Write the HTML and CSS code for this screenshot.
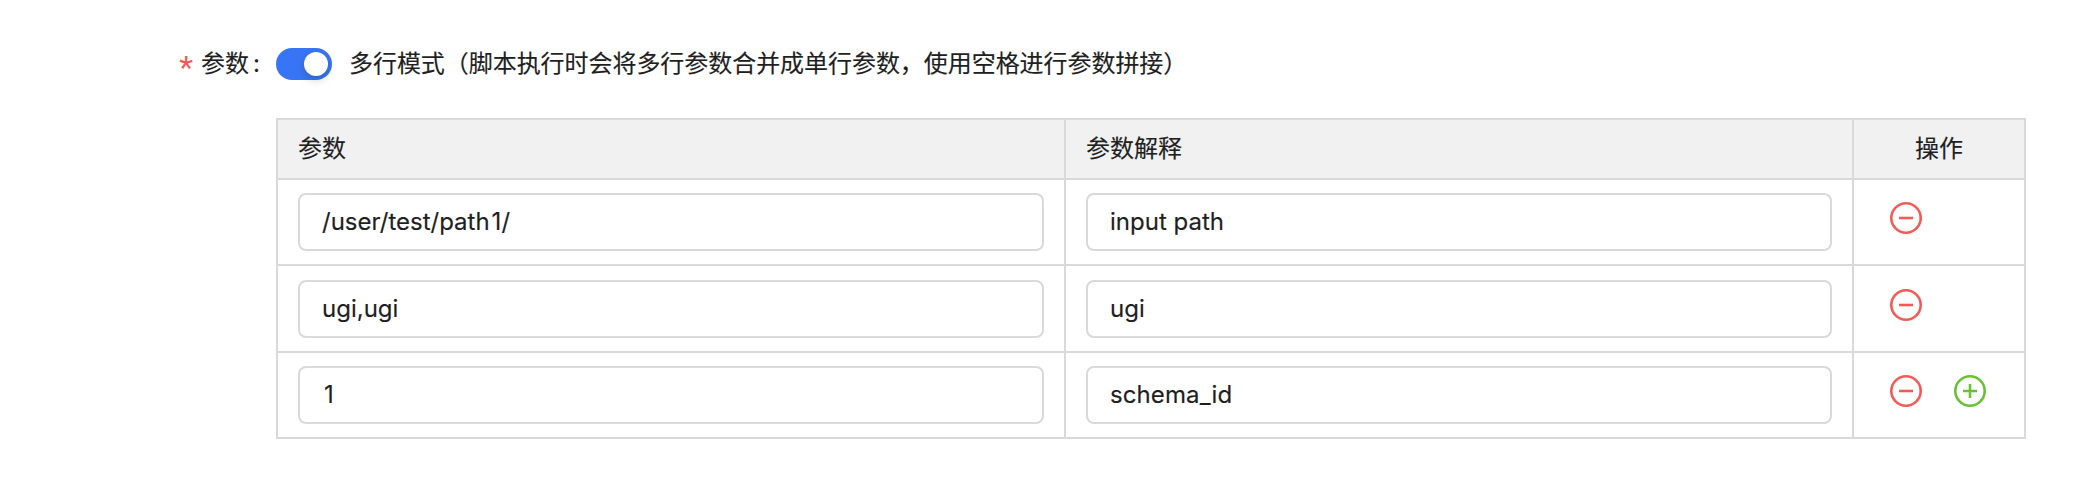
FILE: index.html
```html
<!DOCTYPE html>
<html lang="zh-CN">
<head>
<meta charset="utf-8">
<title>参数</title>
<link rel="stylesheet" href="styles.css">
</head>
<body>
<main class="form-item">
  <div class="label"><span class="required">*</span><span class="label-text">参数</span><span class="colon">:</span></div>
  <div class="control">
    <div class="mode">
      <span class="switch"><span class="knob"></span></span>
      <span class="mode-text">多行模式（脚本执行时会将多行参数合并成单行参数，使用空格进行参数拼接）</span>
    </div>
    <div class="table">
      <div class="row head">
        <div class="cell"><span>参数</span></div>
        <div class="cell"><span>参数解释</span></div>
        <div class="cell center"><span>操作</span></div>
      </div>
      <div class="row">
        <div class="cell"><div class="input">/user/test/path<span class="one">1</span>/</div></div>
        <div class="cell"><div class="input">input path</div></div>
        <div class="cell actions">
          <svg class="icon minus" viewBox="0 0 32 32"><circle cx="16" cy="16" r="14.7"/><path d="M9 16H23"/></svg>
        </div>
      </div>
      <div class="row tall">
        <div class="cell"><div class="input">ugi,ugi</div></div>
        <div class="cell"><div class="input">ugi</div></div>
        <div class="cell actions">
          <svg class="icon minus" viewBox="0 0 32 32"><circle cx="16" cy="16" r="14.7"/><path d="M9 16H23"/></svg>
        </div>
      </div>
      <div class="row">
        <div class="cell"><div class="input"><span class="one">1</span></div></div>
        <div class="cell"><div class="input schema">schema_id</div></div>
        <div class="cell actions">
          <svg class="icon minus" viewBox="0 0 32 32"><circle cx="16" cy="16" r="14.7"/><path d="M9 16H23"/></svg>
          <svg class="icon plus" viewBox="0 0 32 32"><circle cx="16" cy="16" r="14.7"/><path d="M9 16H23M16 9V23"/></svg>
        </div>
      </div>
    </div>
  </div>
</main>
</body>
</html>
```
FILE: styles.css
```css
* { box-sizing: border-box; }

body {
  margin: 0;
  background: #fff;
  color: #1f1f1f;
  font: 24px/32px Inter, "Noto Sans CJK SC", sans-serif;
  -webkit-text-stroke: .15px currentColor;
}

.form-item {
  display: grid;
  grid-template-columns: 276px 1750px;
  padding-top: 48px;
}

.label {
  display: flex;
  justify-content: flex-end;
  height: 32px;
  padding-right: 14px;
}

.required {
  margin-right: 8px;
  padding-top: 3px;
  color: #f45b56;
  font-family: Roboto, sans-serif;
  font-size: 32px;
  -webkit-text-stroke: 0;
}

.colon {
  width: 11px;
  margin-left: 2px;
  text-align: center;
}

.mode {
  display: flex;
  gap: 17px;
  height: 32px;
  margin-bottom: 38px;
}

.switch {
  display: flex;
  justify-content: flex-end;
  width: 56px;
  height: 32px;
  padding: 4px;
  border-radius: 16px;
  background: #3875f6;
}

.knob {
  width: 24px;
  height: 24px;
  border-radius: 50%;
  background: #fff;
  box-shadow: 0 4px 8px rgba(0, 35, 11, .2);
}

.mode-text {
  letter-spacing: -.05px;
  white-space: nowrap;
}

.table {
  border-top: 2px solid #d9d9d9;
  border-left: 2px solid #d9d9d9;
}

.row {
  display: grid;
  grid-template-columns: 788px 788px 172px;
  height: 86px;
}

.row.tall { height: 87px; }

.row.tall .cell { padding-top: 14px; }

.cell {
  padding: 13px 20px 0;
  border-right: 2px solid #d9d9d9;
  border-bottom: 2px solid #d9d9d9;
}

.head {
  height: 60px;
  background: #f1f1f1;
}

.center { text-align: center; }

.input {
  height: 58px;
  padding: 11px 22px;
  border: 2px solid #d9d9d9;
  border-radius: 8px;
  white-space: nowrap;
}

.one { margin-left: 2px; }

.schema { letter-spacing: .1px; }

.row .actions {
  display: flex;
  gap: 32px;
  padding: 22px 0 0 36px;
}

.row.tall .actions { padding-top: 23px; }

.icon {
  width: 32px;
  height: 32px;
  fill: none;
  stroke-width: 2.6;
}

.minus { stroke: #f45b56; }

.plus { stroke: #69c134; }
```
